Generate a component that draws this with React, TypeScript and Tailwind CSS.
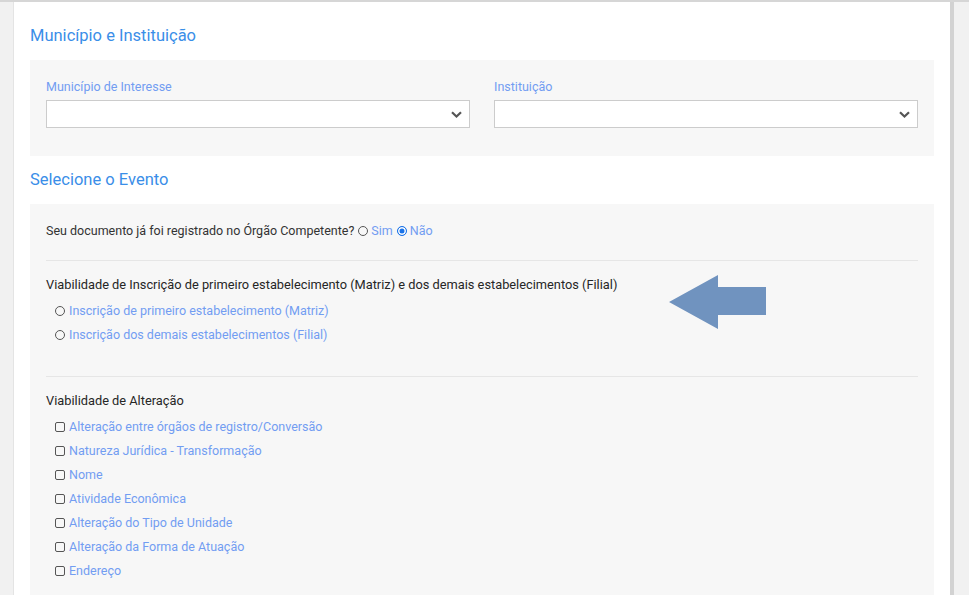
import React from 'react';

const font = { fontFamily: 'Roboto, "Liberation Sans", sans-serif' };

const Chevron = () => (
  <svg className="absolute right-[7px] top-[10px]" width="11" height="7" viewBox="0 0 11 7">
    <path d="M1 1.2 L5.5 5.5 L10 1.2" fill="none" stroke="#555" strokeWidth="2.2" />
  </svg>
);

const SelectField = ({ label }: { label: string }) => (
  <div className="flex-1 flex flex-col">
    <label className="pt-px text-[12.5px] leading-5 text-[#729df2] mb-[3px]">{label}</label>
    <div className="relative h-[28px] bg-white border border-[#cccccc]">
      <Chevron />
    </div>
  </div>
);

const Radio = ({ checked }: { checked?: boolean }) =>
  checked ? (
    <span className="inline-block w-[10px] h-[10px] rounded-full bg-[#1a73e8] border border-[#1a73e8] shadow-[inset_0_0_0_1.5px_white]" />
  ) : (
    <span className="inline-block w-[10px] h-[10px] rounded-full border border-[#555]" />
  );

const Checkbox = () => <span className="inline-block w-[10px] h-[10px] rounded-[2px] border border-[#555]" />;

const Option = ({ kind, text }: { kind: 'radio' | 'check'; text: string }) => (
  <div className="h-6 flex items-center pl-[9px] gap-[4px]">
    {kind === 'radio' ? <Radio /> : <Checkbox />}
    <span className="text-[12.5px] text-[#729df2]">{text}</span>
  </div>
);

const Arrow = () => (
  <svg className="absolute left-[639px] top-[71px]" width="97" height="54" viewBox="0 0 97 54">
    <polygon points="0,27 49,0 49,12 97,12 97,40 49,40 49,54" fill="#7093bf" />
  </svg>
);

const alteracoes = [
  'Alteração entre órgãos de registro/Conversão',
  'Natureza Jurídica - Transformação',
  'Nome',
  'Atividade Econômica',
  'Alteração do Tipo de Unidade',
  'Alteração da Forma de Atuação',
  'Endereço',
];

export default function App() {
  return (
    <div className="w-[969px] h-[605px] bg-white overflow-hidden" style={font}>
      <div className="h-[2px] bg-[#d6d6d6]" />
      <div className="flex h-[593px] bg-[#f1f1f1]">
        <div className="w-[14px] shrink-0 border-r border-[#e4e4e4]" />
        <div className="w-[936px] shrink-0 bg-white pl-4 pr-[16px] flex flex-col">
          <h2 className="pt-[23px] pb-[13px] text-[16.5px] leading-[22px] text-[#3a8ee8]">Município e Instituição</h2>
          <div className="bg-[#f7f7f7] pt-4 pb-[28px] px-4 flex gap-[24px]">
            <SelectField label="Município de Interesse" />
            <SelectField label="Instituição" />
          </div>
          <h2 className="pt-[13px] pb-[13px] text-[16.5px] leading-[22px] text-[#3a8ee8]">Selecione o Evento</h2>
          <div className="relative flex-1 bg-[#f7f7f7] px-4 pt-[17px]">
            <div className="flex items-center text-[12.5px] leading-5 text-[#333]">
              <span>Seu documento já foi registrado no Órgão Competente?</span>
              <span className="ml-[4px] flex items-center gap-[3px]">
                <Radio />
                <span className="text-[#729df2]">Sim</span>
              </span>
              <span className="ml-[4px] flex items-center gap-[3px]">
                <Radio checked />
                <span className="text-[#729df2]">Não</span>
              </span>
            </div>
            <div className="mt-[19px] border-t border-[#e6e6e6]" />
            <div className="mt-[14px] text-[12.8px] leading-5 text-[#262626]">
              Viabilidade de Inscrição de primeiro estabelecimento (Matriz) e dos demais estabelecimentos (Filial)
            </div>
            <div className="mt-1">
              <Option kind="radio" text="Inscrição de primeiro estabelecimento (Matriz)" />
              <Option kind="radio" text="Inscrição dos demais estabelecimentos (Filial)" />
            </div>
            <div className="mt-[29px] border-t border-[#e6e6e6]" />
            <div className="mt-[14px] text-[12.8px] leading-5 text-[#262626]">Viabilidade de Alteração</div>
            <div className="mt-1">
              {alteracoes.map(a => (
                <Option key={a} kind="check" text={a} />
              ))}
            </div>
            <Arrow />
          </div>
        </div>
        <div className="w-[4px] shrink-0 bg-[#d2d2d2]" />
        <div className="flex-1 bg-[#f1f1f1]" />
      </div>
    </div>
  );
}
